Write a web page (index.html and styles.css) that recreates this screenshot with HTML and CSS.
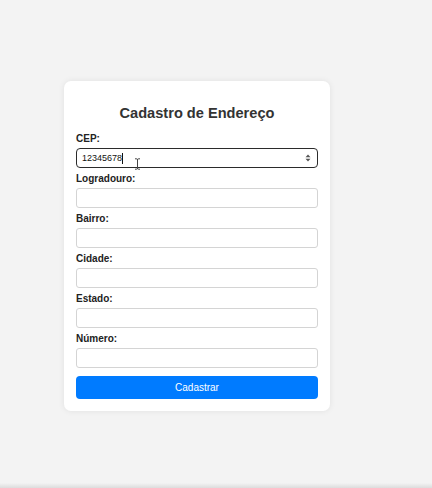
FILE: index.html
```html
<!DOCTYPE html>
<html lang="pt-BR">
<head>
<meta charset="utf-8">
<title>Cadastro de Endereço</title>
<link rel="stylesheet" href="styles.css">
</head>
<body>
<div class="page">
  <form class="card">
    <h2 class="title">Cadastro de Endereço</h2>
    <label class="label" for="cep">CEP:</label>
    <div class="field-wrap">
      <div class="input input-focus" id="cep"><span class="val">12345678</span><span class="caret"></span></div>
      <svg class="spin" width="6" height="8" viewBox="0 0 6 8"><path d="M3 0.5 L5.5 3.3 H0.5 Z M3 7.5 L5.5 4.7 H0.5 Z" fill="#555"/></svg>
      <svg class="ibeam" width="7" height="12" viewBox="0 0 7 12"><path d="M1 0.8 H2.6 Q3.5 0.8 3.5 2 V10 Q3.5 11.2 2.6 11.2 H1 M6 0.8 H4.4 Q3.5 0.8 3.5 2 M6 11.2 H4.4 Q3.5 11.2 3.5 10" fill="none" stroke="#444" stroke-width="1"/></svg>
    </div>
    <label class="label" for="logradouro">Logradouro:</label>
    <input class="input" id="logradouro" type="text">
    <label class="label" for="bairro">Bairro:</label>
    <input class="input" id="bairro" type="text">
    <label class="label" for="cidade">Cidade:</label>
    <input class="input" id="cidade" type="text">
    <label class="label" for="estado">Estado:</label>
    <input class="input" id="estado" type="text">
    <label class="label" for="numero">Número:</label>
    <input class="input" id="numero" type="text">
    <button class="btn" type="button">Cadastrar</button>
  </form>
</div>
<div class="bottom-shade"></div>
</body>
</html>
```

FILE: styles.css
```css
* { box-sizing: border-box; }
html, body {
  margin: 0;
  padding: 0;
  height: 488px;
  background: #f3f3f3;
  font-family: "Liberation Sans", Arial, sans-serif;
  overflow: hidden;
}
.page {
  padding: 81px 0 0 64px;
}
.card {
  width: 266px;
  background: #fff;
  border-radius: 7px;
  padding: 12px 12px 12px;
  box-shadow: 0 0 6px rgba(0,0,0,0.08);
  display: flex;
  flex-direction: column;
}
.title {
  margin: 12px 0 10px;
  font-size: 14.6px;
  line-height: 17px;
  text-align: center;
  color: #333;
  font-weight: bold;
}
.label {
  display: block;
  font-size: 10px;
  line-height: 14px;
  font-weight: bold;
  color: #222;
  margin-bottom: 2px;
}
.field-wrap {
  position: relative;
}
.input {
  display: block;
  width: 100%;
  height: 20px;
  margin: 0 0 4px;
  border: 1px solid #d4d4d4;
  border-radius: 3px;
  background: #fff;
  font-family: inherit;
  font-size: 9px;
  padding: 0 5px;
  outline: none;
}
.input-focus {
  border: 1.5px solid #2b2b2b;
  border-radius: 4px;
  display: flex;
  align-items: center;
  color: #111;
}
.val { font-size: 9px; }
.caret {
  display: inline-block;
  width: 1px;
  height: 11px;
  background: #111;
}
.spin {
  position: absolute;
  right: 7px;
  top: 6px;
}
.ibeam {
  position: absolute;
  left: 58px;
  top: 10px;
}
.btn {
  margin-top: 4px;
  height: 23px;
  border: none;
  border-radius: 4px;
  background: #007bff;
  color: #fff;
  font-family: inherit;
  font-size: 10px;
  width: 100%;
}
.bottom-shade {
  position: fixed;
  left: 0;
  right: 0;
  bottom: 0;
  height: 5px;
  background: linear-gradient(#f3f3f3, #dcdcdc);
}
```
